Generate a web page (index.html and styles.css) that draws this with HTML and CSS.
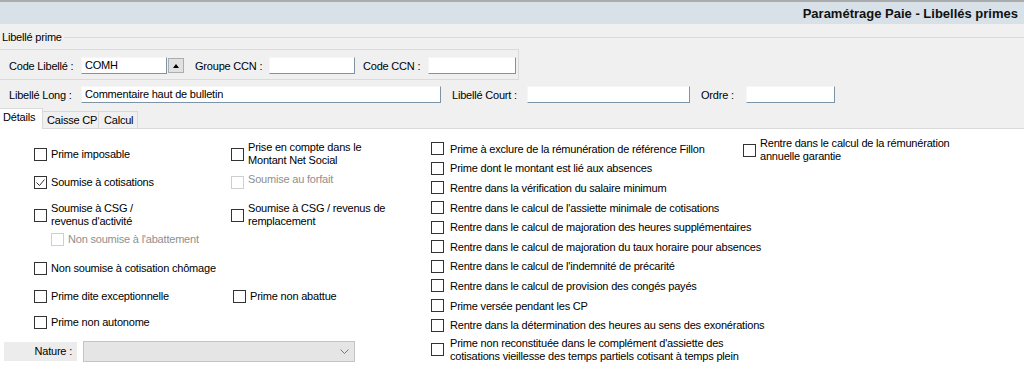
FILE: index.html
```html
<!DOCTYPE html>
<html lang="fr">
<head>
  <meta charset="UTF-8" />
  <title>Paramétrage Paie - Libellés primes</title>
  <link rel="stylesheet" href="styles.css">
</head>
<body>
  <div class="titlebar">
    <span class="title">Paramétrage Paie - Libellés primes</span>
  </div>

  <div class="header">
    <div class="legend"><span>Libellé prime</span></div>

    <div class="code-box">
      <div class="form-row">
        <span class="lbl lbl-first">Code Libellé :</span>
        <span class="field w-code">COMH</span>
        <span class="spin"></span>
        <span class="lbl lbl-groupe">Groupe CCN :</span>
        <span class="field w-groupe"></span>
        <span class="lbl lbl-ccn">Code CCN :</span>
        <span class="field w-ccn"></span>
      </div>
    </div>

    <div class="form-row row-long">
      <span class="lbl lbl-first">Libellé Long :</span>
      <span class="field w-long">Commentaire haut de bulletin</span>
      <span class="lbl lbl-court">Libellé Court :</span>
      <span class="field w-court"></span>
      <span class="lbl lbl-ordre">Ordre :</span>
      <span class="field w-ordre"></span>
    </div>

    <div class="tabs">
      <span class="tab tab-active">Détails</span>
      <span class="tab tab-caisse">Caisse CP</span>
      <span class="tab tab-calcul">Calcul</span>
    </div>
  </div>

  <div class="content">
    <div class="left">
      <label class="check"><span class="box"></span><span>Prime imposable</span></label>
      <label class="check col-b"><span class="box"></span><span class="multi">Prise en compte dans le<br>Montant Net Social</span></label>

      <label class="check"><span class="box checked"><svg width="11" height="11" viewBox="0 0 11 11"><path d="M1.5 5.5 L4.5 8.5 L9.5 2.5" fill="none" stroke="#333" stroke-width="1"/></svg></span><span>Soumise à cotisations</span></label>
      <label class="check col-b disabled raised"><span class="box"></span><span>Soumise au forfait</span></label>

      <label class="check"><span class="box"></span><span class="multi">Soumise à CSG /<br>revenus d'activité</span></label>
      <label class="check col-b"><span class="box"></span><span class="multi">Soumise à CSG / revenus de<br>remplacement</span></label>

      <label class="check disabled sub"><span class="box"></span><span>Non soumise à l'abattement</span></label>

      <label class="check wide"><span class="box"></span><span>Non soumise à cotisation chômage</span></label>

      <label class="check"><span class="box"></span><span>Prime dite exceptionnelle</span></label>
      <label class="check col-b shift"><span class="box"></span><span>Prime non abattue</span></label>

      <label class="check"><span class="box"></span><span>Prime non autonome</span></label>

      <div class="nature">
        <span class="nature-label">Nature :</span>
        <span class="select">
          <svg width="9" height="5" viewBox="0 0 9 5"><polyline points="0.5,0.5 4.5,4.5 8.5,0.5" fill="none" stroke="#777" stroke-width="1"/></svg>
        </span>
      </div>
    </div>

    <div class="right">
      <div class="opts">
        <label class="opt"><span class="box"></span><span>Prime à exclure de la rémunération de référence Fillon</span></label>
        <label class="opt"><span class="box"></span><span>Prime dont le montant est lié aux absences</span></label>
        <label class="opt"><span class="box"></span><span>Rentre dans la vérification du salaire minimum</span></label>
        <label class="opt"><span class="box"></span><span>Rentre dans le calcul de l'assiette minimale de cotisations</span></label>
        <label class="opt"><span class="box"></span><span>Rentre dans le calcul de majoration des heures supplémentaires</span></label>
        <label class="opt"><span class="box"></span><span>Rentre dans le calcul de majoration du taux horaire pour absences</span></label>
        <label class="opt"><span class="box"></span><span>Rentre dans le calcul de l'indemnité de précarité</span></label>
        <label class="opt"><span class="box"></span><span>Rentre dans le calcul de provision des congés payés</span></label>
        <label class="opt"><span class="box"></span><span>Prime versée pendant les CP</span></label>
        <label class="opt"><span class="box"></span><span>Rentre dans la détermination des heures au sens des exonérations</span></label>
        <label class="opt opt-tall"><span class="box"></span><span class="multi">Prime non reconstituée dans le complément d'assiette des<br>cotisations vieillesse des temps partiels cotisant à temps plein</span></label>
      </div>
      <label class="opt opt-extra"><span class="box"></span><span class="multi">Rentre dans le calcul de la rémunération<br>annuelle garantie</span></label>
    </div>
  </div>
</body>
</html>
```

FILE: styles.css
```css
body {
  margin: 0;
  font-family: "Liberation Sans", Arial, sans-serif;
  font-size: 11px;
  letter-spacing: -0.2px;
  color: #000;
  background: #fff;
  overflow: hidden;
}

/* Title bar */
.titlebar {
  height: 22px;
  border-top: 2px solid #a9abad;
  background: #d7e1e7;
  display: flex;
  align-items: center;
  justify-content: flex-end;
  padding-right: 6px;
}

.title {
  font-weight: bold;
  font-size: 13px;
  letter-spacing: 0;
  color: #111;
}

/* Header form */
.header {
  background: #f0f0f0;
}

.legend {
  height: 25px;
  box-sizing: border-box;
  padding: 2px 0 0 2px;
  display: flex;
  align-items: center;
  gap: 2px;
  line-height: 13px;
}

.legend::after {
  content: "";
  flex: 1;
  height: 1px;
  background: #dadada;
}

.code-box {
  width: 519px;
  height: 31px;
  box-sizing: border-box;
  border: 1px solid #dadada;
  border-left: none;
  padding-top: 7px;
}

.form-row {
  display: flex;
  align-items: center;
  height: 17px;
  padding-left: 9px;
}

.row-long {
  margin-top: 6px;
}

.lbl {
  flex-shrink: 0;
}

.lbl-first { width: 72px; }
.lbl-groupe { width: 74px; margin-left: 11px; }
.lbl-ccn { width: 65px; margin-left: 8px; }
.lbl-court { width: 75px; margin-left: 11px; }
.lbl-ordre { width: 45px; margin-left: 11px; }

.field {
  height: 17px;
  box-sizing: border-box;
  background: #fff;
  border: 1px solid;
  border-color: #f6f6f6 #7d93a6 #7d93a6 #f6f6f6;
  padding-left: 3px;
  line-height: 15px;
  flex-shrink: 0;
}

.w-code { width: 86px; }
.w-groupe { width: 86px; }
.w-ccn { width: 88px; }
.w-long { width: 360px; }
.w-court { width: 163px; }
.w-ordre { width: 89px; }

.spin {
  width: 16px;
  height: 15px;
  margin-left: 1px;
  box-sizing: border-box;
  background: #e1e1e1;
  border: 1px solid #adadad;
  display: flex;
  align-items: center;
  justify-content: center;
}

.spin::before {
  content: "";
  border-left: 3px solid transparent;
  border-right: 3px solid transparent;
  border-bottom: 4px solid #000;
}

/* Tabs */
.tabs {
  margin-top: 5px;
  height: 20px;
  display: flex;
  align-items: flex-end;
  border-bottom: 1px solid #d9d9d9;
}

.tab {
  height: 17px;
  box-sizing: border-box;
  padding-left: 4px;
  border: 1px solid #d9d9d9;
  border-bottom: none;
  margin-left: -1px;
  background: #f0f0f0;
  line-height: 16px;
}

.tab-caisse { width: 57px; }
.tab-calcul { width: 40px; padding-left: 5px; }

.tab-active {
  width: 43px;
  height: 21px;
  margin-left: 0;
  margin-bottom: -1px;
  padding: 2px 0 0 3px;
  background: #fff;
  border-left: none;
  line-height: 13px;
  position: relative;
}

/* Options */
.content {
  display: flex;
  height: 242px;
  background: #fff;
}

.left {
  width: 431px;
  flex-shrink: 0;
  box-sizing: border-box;
  padding: 15px 0 0 4px;
  display: grid;
  grid-template-columns: 30px 197px 1fr;
  grid-template-rows: 28px 33px 24px 29px 28px 26px 29px 21px;
  align-content: start;
}

.check {
  grid-column: 2;
  display: flex;
  align-items: center;
  gap: 4px;
  height: 20px;
  align-self: start;
  white-space: nowrap;
}

.col-b { grid-column: 3; }
.wide { grid-column: 2 / 4; }
.sub { margin-left: 17px; }
.shift { margin-left: 2px; }

.raised > span:last-child {
  margin-bottom: 6px;
}

.multi {
  line-height: 13px;
}

.box {
  width: 13px;
  height: 13px;
  box-sizing: border-box;
  border: 1px solid #333;
  background: #fff;
  flex-shrink: 0;
  display: flex;
}

.disabled {
  color: #8f8f8f;
}

.disabled .box {
  border-color: #cfcfcf;
}

.nature {
  grid-column: 1 / -1;
  display: flex;
  align-items: center;
  gap: 6px;
  height: 21px;
}

.nature-label {
  width: 73px;
  height: 19px;
  box-sizing: border-box;
  background: #ececec;
  text-align: right;
  padding-right: 5px;
  line-height: 19px;
}

.select {
  width: 272px;
  height: 21px;
  box-sizing: border-box;
  border: 1px solid #c4c4c4;
  background: #e5e5e5;
  display: flex;
  align-items: center;
  justify-content: flex-end;
  padding-right: 5px;
}

.right {
  display: flex;
  align-items: flex-start;
}

.opts {
  width: 312px;
  flex-shrink: 0;
  padding-top: 10px;
  display: flex;
  flex-direction: column;
}

.opt {
  display: flex;
  align-items: center;
  gap: 6px;
  height: 19.6px;
  white-space: nowrap;
}

.opt-tall {
  height: 30px;
}

.opt-extra {
  margin-top: 11px;
  height: 20px;
  gap: 4px;
}
```
